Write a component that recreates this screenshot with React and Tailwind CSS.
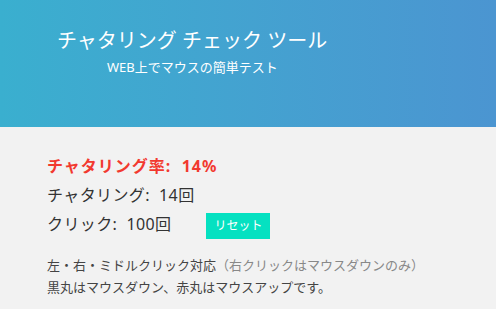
// Chattering check tool - header banner and counter panel
export default function App() {
  const font = { fontFamily: '"Noto Sans", "Noto Sans CJK JP", sans-serif' };

  return (
    <div className="w-[496px] h-[309px] overflow-hidden bg-[#f2f2f2]" style={font}>
      <header className="h-[127px] bg-gradient-to-r from-[#3aafcf] to-[#4b95d1] pt-[26px]">
        <h1 className="pl-[57px] text-[20px] leading-[30px] text-white font-normal">
          チャタリング チェック ツール
        </h1>
        <p className="pl-[107px] mt-[1px] text-[13px] leading-[20px] text-white">
          WEB上でマウスの簡単テスト
        </p>
      </header>

      <main className="pl-[47px] pt-[25px]">
        <p className="text-[16px] leading-[29px] font-bold tracking-[1px] text-[#f2392f]">チャタリング率:&nbsp; 14%</p>
        <p className="text-[16px] leading-[29px] tracking-[0.4px] text-[#333]">チャタリング:&nbsp; 14回</p>
        <div className="flex items-center">
          <p className="text-[16px] leading-[29px] tracking-[0.4px] text-[#333]">クリック:&nbsp; 100回</p>
          <button className="ml-[35px] mt-[2px] w-[64px] h-[26px] bg-[#05e1c1] text-white text-[12px]">
            リセット
          </button>
        </div>
        <div className="mt-[15px] text-[13px] leading-[22px] text-[#444]">
          <p>
            左・右・ミドルクリック対応<span className="text-[#888]">（右クリックはマウスダウンのみ）</span>
          </p>
          <p>黒丸はマウスダウン、赤丸はマウスアップです。</p>
        </div>
      </main>
    </div>
  );
}
